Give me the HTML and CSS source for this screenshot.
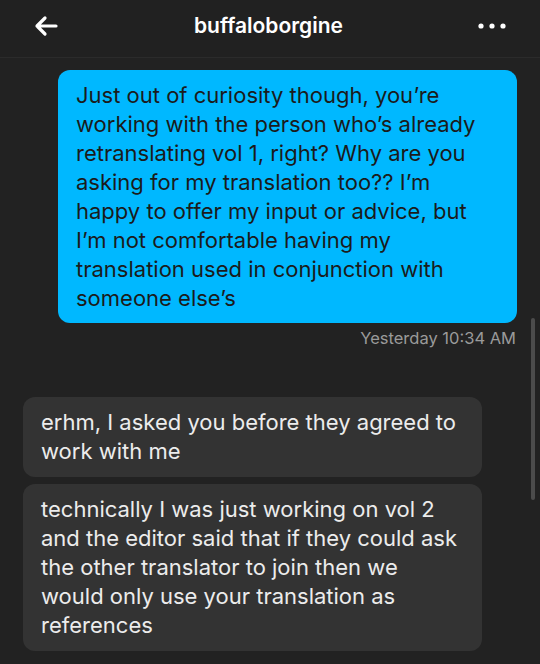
FILE: index.html
```html
<!DOCTYPE html>
<html lang="en">
<head>
    <meta charset="UTF-8">
    <meta name="viewport" content="width=device-width, initial-scale=1.0">
    <title>buffaloborgine</title>
    <link rel="stylesheet" href="styles.css">
</head>
<body>

    <!-- Top bar -->
    <header class="topbar">
        <svg class="back" width="26" height="22" viewBox="0 0 26 22">
            <path d="M23 11H4M12 3L4 11l8 8" fill="none" stroke="#fff" stroke-width="3.2" stroke-linecap="round" stroke-linejoin="round"/>
        </svg>
        <h1 class="title">buffaloborgine</h1>
        <svg class="more" width="28" height="8" viewBox="0 0 28 8">
            <circle cx="3" cy="4" r="2.6" fill="#fff"/>
            <circle cx="14" cy="4" r="2.6" fill="#fff"/>
            <circle cx="25" cy="4" r="2.6" fill="#fff"/>
        </svg>
    </header>

    <!-- Conversation -->
    <main class="thread">
        <div class="msg mine">Just out of curiosity though, you’re working with the person who’s already retranslating vol 1, right? Why are you asking for my translation too?? I’m happy to offer my input or advice, but I’m not comfortable having my translation used in conjunction with someone else’s</div>
        <div class="stamp">Yesterday 10:34 AM</div>

        <div class="group">
            <div class="msg theirs">erhm, I asked you before they agreed to work with me</div>
            <div class="msg theirs">technically I was just working on vol 2 and the editor said that if they could ask the other translator to join then we would only use your translation as references</div>
        </div>
    </main>

    <div class="scrollbar"></div>

</body>
</html>
```

FILE: styles.css
```css
body {
    margin: 0;
    background: #222222;
    font-family: Inter, "Noto Sans", sans-serif;
    height: 664px;
    overflow: hidden;
}
.topbar {
    height: 58px;
    display: flex;
    align-items: center;
    justify-content: space-between;
    padding: 0 34px 6px 33px;
    box-sizing: border-box;
    border-bottom: 1px solid #2b2b2b;
    background: #212121;
}
.title {
    margin: 0;
    color: #ffffff;
    font-size: 21px;
    font-weight: 600;
}
.thread {
    padding: 12px 23px 0 23px;
    display: flex;
    flex-direction: column;
}
.msg {
    width: 459px;
    box-sizing: border-box;
    padding: 11px 18px 10px;
    border-radius: 12px;
    font-size: 22px;
    line-height: 29px;
}
.mine {
    align-self: flex-end;
    background: #00b8ff;
    color: #1b1b1b;
}
.stamp {
    align-self: flex-end;
    color: #9a9a9a;
    font-size: 16.5px;
    margin-top: 5px;
    margin-right: 1px;
}
.group {
    margin-top: 49px;
    display: flex;
    flex-direction: column;
    gap: 7px;
}
.theirs {
    padding-bottom: 11px;
    background: #333333;
    color: #ececec;
}
.scrollbar {
    position: absolute;
    left: 531px;
    top: 318px;
    width: 4px;
    height: 182px;
    border-radius: 2px;
    background: #4c4c4c;
}
```
